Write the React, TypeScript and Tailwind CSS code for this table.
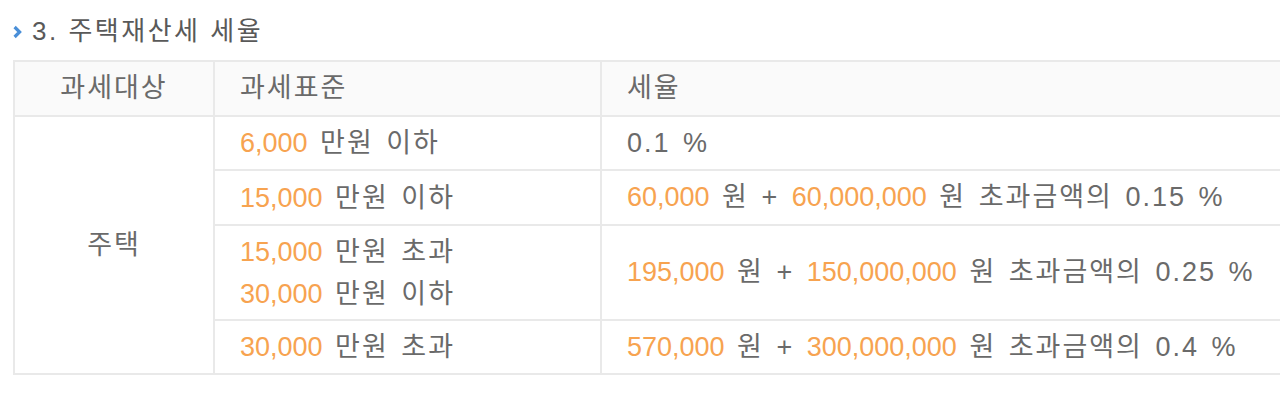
import React from 'react';

interface TaxRow {
  base: { amount: string; unit: string }[];
  rate: React.ReactNode;
  height: string;
}

const Num = ({ children }: { children: React.ReactNode }) => (
  <span className="text-[#f7a350] text-[27px] tracking-[0px]">{children}</span>
);

const rows: TaxRow[] = [
  {
    base: [{ amount: '6,000', unit: '만원 이하' }],
    rate: <>0.1 %</>,
    height: 'h-[52px]',
  },
  {
    base: [{ amount: '15,000', unit: '만원 이하' }],
    rate: (
      <>
        <Num>60,000</Num> 원 + <Num>60,000,000</Num> 원 초과금액의 0.15 %
      </>
    ),
    height: 'h-[53px]',
  },
  {
    base: [
      { amount: '15,000', unit: '만원 초과' },
      { amount: '30,000', unit: '만원 이하' },
    ],
    rate: (
      <>
        <Num>195,000</Num> 원 + <Num>150,000,000</Num> 원 초과금액의 0.25 %
      </>
    ),
    height: 'h-[93px]',
  },
  {
    base: [{ amount: '30,000', unit: '만원 초과' }],
    rate: (
      <>
        <Num>570,000</Num> 원 + <Num>300,000,000</Num> 원 초과금액의 0.4 %
      </>
    ),
    height: 'h-[52px]',
  },
];

export default function App() {
  return (
    <div
      className="w-[1280px] h-[407px] overflow-hidden bg-white text-[#6a6a6a] pl-[13px]"
      style={{ fontFamily: '"Liberation Sans", "Noto Sans CJK KR", sans-serif' }}
    >
      {/* section title */}
      <div className="flex items-center h-[60px] pt-[2px]">
        <svg width="9" height="14" viewBox="0 0 9 14" className="mr-[10px] mt-[2px]">
          <path d="M1.6 2 L6.6 7 L1.6 12" fill="none" stroke="#4a8fd8" strokeWidth="3.2" />
        </svg>
        <h3 className="text-[26px] tracking-[2.5px] text-[#595959] font-normal leading-none">
          3. 주택재산세 세율
        </h3>
      </div>

      <table className="w-[1320px] table-fixed border-separate border-spacing-[2px] bg-[#e9e9e9] text-[27px] tracking-[2px] [word-spacing:3px]">
        <colgroup>
          <col className="w-[198px]" />
          <col className="w-[385px]" />
          <col />
        </colgroup>
        <thead>
          <tr className="h-[53px] bg-[#fafafa]">
            <th className="font-normal text-center">과세대상</th>
            <th className="font-normal text-left pl-[25px]">과세표준</th>
            <th className="font-normal text-left pl-[25px]">세율</th>
          </tr>
        </thead>
        <tbody>
          {rows.map((row, i) => (
            <tr key={i} className={`${row.height} bg-white`}>
              {i === 0 && (
                <td rowSpan={rows.length} className="text-center align-middle">
                  주택
                </td>
              )}
              <td className="pl-[25px] align-middle">
                {row.base.map((b, j) => (
                  <div key={j} className="leading-[42px]">
                    <Num>{b.amount}</Num> {b.unit}
                  </div>
                ))}
              </td>
              <td className="pl-[25px] align-middle whitespace-nowrap">{row.rate}</td>
            </tr>
          ))}
        </tbody>
      </table>
    </div>
  );
}
